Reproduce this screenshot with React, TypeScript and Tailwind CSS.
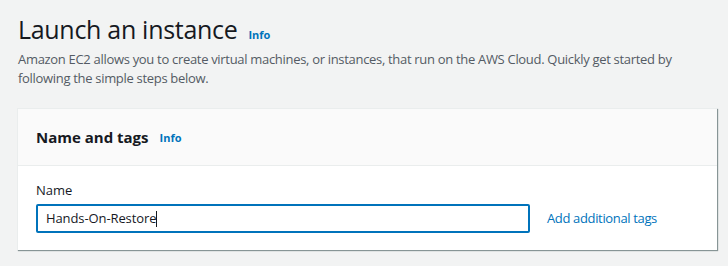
import React from "react";

export default function App() {
  return (
    <div
      className="w-[728px] h-[266px] bg-[#f2f3f3] overflow-hidden"
      style={{ fontFamily: '"Open Sans", "Noto Sans", Arial, sans-serif' }}
    >
      <div className="pl-[17px] pr-[10px] pt-[13px]">
        <div className="flex items-baseline gap-[11px] pl-[1px]">
          <h1 className="text-[25px] leading-[32px] font-normal tracking-[-0.3px] text-[#16191f]">Launch an instance</h1>
          <span className="text-[11px] font-bold text-[#0073bb]">Info</span>
        </div>
        <p className="mt-[5px] pl-[1px] text-[13px] leading-[19px] tracking-[-0.31px] text-[#545b64]">
          Amazon EC2 allows you to create virtual machines, or instances, that run on the AWS Cloud. Quickly get started by
          following the simple steps below.
        </p>
        <div className="mt-[20px] w-[700px] bg-white border-t border-l border-[#eaeded] shadow-[1px_1px_1px_0_#879596]">
          <div className="bg-[#fafafa] border-b border-[#eaeded] h-[57px] px-[18px] flex items-center gap-[11px]">
            <span className="text-[15px] font-bold text-[#16191f]">Name and tags</span>
            <span className="text-[11px] font-bold text-[#0073bb] mt-[2px]">Info</span>
          </div>
          <div className="px-[18px] pt-[14px] pb-[17px]">
            <div className="text-[13px] leading-[20px] text-[#16191f]">Name</div>
            <div className="mt-[4px] flex items-center gap-[17px]">
              <div className="w-[494px] h-[29px] border-2 border-[#0073bb] rounded-[2px] flex items-center pl-[8px] text-[13px] tracking-[-0.1px] text-[#16191f]">
                Hands-On-Restore<span className="inline-block w-[1px] h-[16px] bg-[#16191f]" />
              </div>
              <span className="text-[13px] tracking-[-0.35px] text-[#0073bb]">Add additional tags</span>
            </div>
          </div>
        </div>
      </div>
    </div>
  );
}
